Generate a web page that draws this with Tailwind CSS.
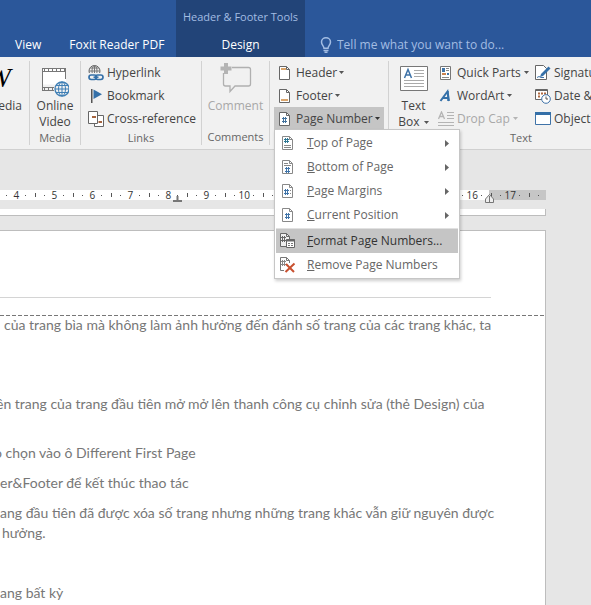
<!DOCTYPE html>
<html lang="vi">
    <head>
        <meta charset="UTF-8">
        <meta name="viewport" content="width=device-width, initial-scale=1.0">
        <title>Header &amp; Footer Tools</title>
        <script src="https://cdn.jsdelivr.net/npm/@tailwindcss/browser@4"></script>
    </head>
    <body class="min-h-screen flex flex-col overflow-hidden bg-[#e6e6e6] font-['Open_Sans','Noto_Sans',sans-serif] text-[12px] leading-4 text-[#444]">
        <!-- Tabs -->
        <header class="h-[57px] shrink-0 flex bg-[#2b579a] text-white whitespace-nowrap">
            <nav class="w-[176px] shrink-0 flex items-end gap-7 pl-[15px] pb-1">
                <a href="#">View</a>
                <a href="#">Foxit Reader PDF</a>
            </nav>
            <div class="w-[129px] shrink-0 flex flex-col items-center justify-between bg-[#224478] pt-[9px] pb-1">
                <span class="text-[11px] text-[#a3bde3]">Header &amp; Footer Tools</span>
                <a href="#">Design</a>
            </div>
            <label class="flex items-end gap-[5px] pl-[15px] pb-1 grow text-[#a3bde3]">
                <svg class="w-3 h-4 shrink-0" viewBox="0 0 12 16" fill="none" stroke="#a3bde3" stroke-width="1.5">
                    <path d="M4 11.2C4 9 1.5 8 1.5 5a4.5 4.2 0 0 1 9 0c0 3-2.500 4-2.500 6.200z"></path>
                    <path d="M3.500 13.500h5M4.500 15.200h3"></path>
                </svg>
                <input type="text" placeholder="Tell me what you want to do..." class="grow h-4 min-w-0 outline-none placeholder:text-[#a3bde3] placeholder:opacity-100">
            </label>
        </header>
        <!-- Ribbon -->
        <section class="h-[93px] shrink-0 flex py-1 bg-[#f1f1f1] border-b border-[#d0d0d0] whitespace-nowrap">
            <div class="w-[30px] shrink-0 flex justify-end border-r border-[#d2d2d2]">
                <button class="flex flex-col items-start pr-[7px]">
                    <span class="h-[37px] pt-px font-['Liberation_Serif',serif] italic text-[28px] leading-8 text-black">W</span>
                    <span>Media</span>
                </button>
            </div>
            <div class="w-[51px] shrink-0 flex flex-col items-center justify-between border-r border-[#d2d2d2]">
                <button class="flex flex-col items-center">
                    <svg class="w-7 h-[37px]" viewBox="0 0 28 37" fill="none">
                        <path d="M1 7.500h24v16H1z" fill="#fff"></path>
                        <path d="M1.500 7v23M24.500 7v11M1 7.500h24M1 10.500h24M1 26.500h12M1 29.500h12" stroke="#777"></path>
                        <path d="M3 9h22M3 28h10" stroke="#777" stroke-width="2" stroke-dasharray="1 3"></path>
                        <circle cx="21" cy="28" r="7" fill="#f1f1f1" stroke="#3f7fb5" stroke-width="1.300"></circle>
                        <path d="M14 28h14M21 21v14M15 24.500h12M15 31.500h12" stroke="#3f7fb5"></path>
                        <ellipse cx="21" cy="28" rx="3.500" ry="7" stroke="#3f7fb5"></ellipse>
                    </svg>
                    <span>Online<br>Video</span>
                </button>
                <span class="text-[11px] text-[#666]">Media</span>
            </div>
            <div class="w-[121px] shrink-0 flex flex-col items-center justify-between border-r border-[#d2d2d2]">
                <div class="w-full flex flex-col pl-[7px]">
                    <button class="h-[23px] flex items-center gap-[3px]">
                        <svg class="w-4 h-4" viewBox="0 0 16 16" fill="none">
                            <circle cx="6.500" cy="6" r="5.500" stroke="#666"></circle>
                            <path d="M1 6h11M6.500 .5v9M2 3h9" stroke="#777"></path>
                            <ellipse cx="6.500" cy="6" rx="2.500" ry="5.500" stroke="#777"></ellipse>
                            <path d="M0 8h16v8H0z" fill="#f1f1f1"></path>
                            <rect x="1" y="10" width="7.500" height="4.500" rx="2.200" stroke="#3570a8" stroke-width="1.700"></rect>
                            <rect x="7.500" y="10" width="7.500" height="4.500" rx="2.200" stroke="#3570a8" stroke-width="1.700"></rect>
                            <path d="M5.500 12.200h5" stroke="#3570a8" stroke-width="1.500"></path>
                        </svg>
                        Hyperlink
                    </button>
                    <button class="h-[23px] flex items-center gap-[3px]">
                        <svg class="w-4 h-4" viewBox="0 0 16 16">
                            <path d="M3 1h1.500v14H3z" fill="#555"></path>
                            <path d="M5.500 1.500L14 6.300l-8.500 4.700z" fill="#3570a8"></path>
                        </svg>
                        Bookmark
                    </button>
                    <button class="h-[23px] flex items-center gap-[3px]">
                        <svg class="w-4 h-4" viewBox="0 0 16 16" fill="none" stroke="#666">
                            <path d="M9.500 4.500h6v11h-9v-3" fill="#fff"></path>
                            <path d="M.5 .5h9v12h-9z" fill="#fff"></path>
                            <path d="M4 6h4M10.500 11h3.500" stroke="#a5643f" stroke-width="2"></path>
                        </svg>
                        Cross-reference
                    </button>
                </div>
                <span class="text-[11px] text-[#666]">Links</span>
            </div>
            <div class="w-[68px] shrink-0 flex flex-col items-center justify-between border-r border-[#d2d2d2]">
                <button class="flex flex-col items-center text-[#a8a8a8]" disabled>
                    <svg class="w-8 h-[37px]" viewBox="0 0 32 37" fill="none">
                        <path d="M12 6.500h16.500q2 0 2 2v14.500q0 2-2 2H15l-5 5.500v-5.500H5.500q-2 0-2-2V12" stroke="#b0b0b0" stroke-width="1.300"></path>
                        <path d="M6 2v11M.5 7.500h11" stroke="#b4b4b4" stroke-width="4"></path>
                    </svg>
                    <span>Comment</span>
                </button>
                <span class="text-[11px] text-[#666]">Comments</span>
            </div>
            <div class="w-[119px] shrink-0 flex flex-col pl-1 border-r border-[#d2d2d2]">
                <button class="h-[23px] flex items-center gap-1 pl-1">
                    <svg class="w-[14px] h-4 shrink-0" viewBox="0 0 14 16" fill="none">
                        <path d="M1.500 1.500h7l3 3v10h-10z" fill="#fff" stroke="#666"></path>
                        <path d="M8.500 1.500v3h3" stroke="#666"></path>
                        <path d="M3 4h5" stroke="#dba56b" stroke-width="2"></path>
                    </svg>
                    Header
                    <svg class="w-[5px] h-[3px] -ml-[2px]" viewBox="0 0 5 3"><path d="M0 0h5L2.500 3z" fill="#555"></path></svg>
                </button>
                <button class="h-[23px] flex items-center gap-1 pl-1">
                    <svg class="w-[14px] h-4 shrink-0" viewBox="0 0 14 16" fill="none">
                        <path d="M1.500 1.500h7l3 3v10h-10z" fill="#fff" stroke="#666"></path>
                        <path d="M8.500 1.500v3h3" stroke="#666"></path>
                        <path d="M3 12h7" stroke="#dba56b" stroke-width="2"></path>
                    </svg>
                    Footer
                    <svg class="w-[5px] h-[3px] -ml-[2px]" viewBox="0 0 5 3"><path d="M0 0h5L2.500 3z" fill="#555"></path></svg>
                </button>
                <div class="relative w-[110px]">
                    <button id="page-number-btn" class="w-full h-[23px] flex items-center gap-1 pl-1 bg-[#c5c5c5]">
                        <svg class="w-[14px] h-4 shrink-0" viewBox="0 0 14 16" fill="none">
                            <path d="M1.500 1.500h7l3 3v10h-10z" fill="#fff" stroke="#666"></path>
                            <path d="M8.500 1.500v3h3" stroke="#666"></path>
                            <path d="M5.500 6v6M7.500 6v6M4 7.500h5M4 10.500h5" stroke="#41719c"></path>
                        </svg>
                        Page Number
                        <svg class="w-[5px] h-[3px] -ml-[2px]" viewBox="0 0 5 3"><path d="M0 0h5L2.500 3z" fill="#333"></path></svg>
                    </button>
                    <!-- Page number menu -->
                    <ul id="page-number-menu" class="absolute top-[22px] left-0 z-10 w-[186px] p-px bg-white border border-[#c6c6c6] shadow-[1px_2px_3px_rgba(0,0,0,0.2)] text-[#666]">
                        <li>
                            <button class="w-full h-6 flex items-center pl-[3px] pr-[9px]">
                                <svg class="w-[18px] h-4 mr-[10px]" viewBox="0 0 18 16" fill="none">
                                    <path d="M3.500 1.500h7l3 3v10h-10z" stroke="#888"></path>
                                    <path d="M10.500 1.500v3h3M5 10.500h7M5 12.500h7" stroke="#888"></path>
                                    <path d="M6.500 3v5M8.500 3v5M5 4.500h5M5 6.500h5" stroke="#2f7894"></path>
                                </svg>
                                <span><u>T</u>op of Page</span>
                                <svg class="w-1 h-[7px] ml-auto" viewBox="0 0 4 7"><path d="M0 0l4 3.500L0 7z" fill="#666"></path></svg>
                            </button>
                        </li>
                        <li>
                            <button class="w-full h-6 flex items-center pl-[3px] pr-[9px]">
                                <svg class="w-[18px] h-4 mr-[10px]" viewBox="0 0 18 16" fill="none">
                                    <path d="M3.500 1.500h7l3 3v10h-10z" stroke="#888"></path>
                                    <path d="M10.500 1.500v3h3M5 4.500h4M5 6.500h7" stroke="#888"></path>
                                    <path d="M7.500 8v6M9.500 8v6M6 9.500h5M6 12.500h5" stroke="#3f73a8"></path>
                                </svg>
                                <span><u>B</u>ottom of Page</span>
                                <svg class="w-1 h-[7px] ml-auto" viewBox="0 0 4 7"><path d="M0 0l4 3.500L0 7z" fill="#666"></path></svg>
                            </button>
                        </li>
                        <li>
                            <button class="w-full h-6 flex items-center pl-[3px] pr-[9px]">
                                <svg class="w-[18px] h-4 mr-[10px]" viewBox="0 0 18 16" fill="none">
                                    <path d="M3.500 1.500h7l3 3v10h-10z" stroke="#888"></path>
                                    <path d="M10.500 1.500v3h3M11 7.500h1M11 10.500h1" stroke="#888"></path>
                                    <path d="M6.500 6v6M8.500 6v6M5 7.500h5M5 10.500h5" stroke="#3f73a8"></path>
                                </svg>
                                <span><u>P</u>age Margins</span>
                                <svg class="w-1 h-[7px] ml-auto" viewBox="0 0 4 7"><path d="M0 0l4 3.500L0 7z" fill="#666"></path></svg>
                            </button>
                        </li>
                        <li>
                            <button class="w-full h-6 flex items-center pl-[3px] pr-[9px]">
                                <svg class="w-[18px] h-4 mr-[10px]" viewBox="0 0 18 16" fill="none">
                                    <path d="M3.500 1.500h7l3 3v10h-10z" stroke="#888"></path>
                                    <path d="M10.500 1.500v3h3" stroke="#888"></path>
                                    <path d="M7.500 6v6M9.500 6v6M6 7.500h5M6 10.500h5" stroke="#3f73a8"></path>
                                </svg>
                                <span><u>C</u>urrent Position</span>
                                <svg class="w-1 h-[7px] ml-auto" viewBox="0 0 4 7"><path d="M0 0l4 3.500L0 7z" fill="#666"></path></svg>
                            </button>
                        </li>
                        <li class="mt-px border-t border-[#e1e1e1]">
                            <button class="w-full h-6 flex items-center pl-[3px] bg-[#c5c5c5] text-[#333]">
                                <svg class="w-[18px] h-4 mr-[10px]" viewBox="0 0 18 16" fill="none">
                                    <path d="M1.500 .5h6l3 3v10h-9z" fill="#eee" stroke="#666"></path>
                                    <path d="M7.500 .5v3h3" stroke="#666"></path>
                                    <path d="M3.500 3v6M5.500 3v6M2 4.500h5M2 7.500h5" stroke="#666"></path>
                                    <path d="M7.500 6.500h8v8h-8z" fill="#fff" stroke="#666"></path>
                                    <path d="M7 7.500h9" stroke="#666" stroke-width="2"></path>
                                    <path d="M9 10.500h2M12 10.500h2M9 12.500h2M12 12.500h2" stroke="#777"></path>
                                </svg>
                                <span><u>F</u>ormat Page Numbers...</span>
                            </button>
                        </li>
                        <li>
                            <button class="w-full h-6 flex items-center pl-[3px]">
                                <svg class="w-[18px] h-4 mr-[10px]" viewBox="0 0 18 16" fill="none">
                                    <path d="M5 13.500H1.500V.5h6l3 3V6" stroke="#777"></path>
                                    <path d="M7.500 .5v3h3" stroke="#777"></path>
                                    <path d="M3.500 3v6M5.500 3v6M2 4.500h5M2 7.500h5" stroke="#888"></path>
                                    <path d="M7 7l8 8M15.500 6.500l-9 8.500" stroke="#c8502f" stroke-width="2"></path>
                                </svg>
                                <span><u>R</u>emove Page Numbers</span>
                            </button>
                        </li>
                    </ul>
                </div>
            </div>
            <div class="w-[264px] shrink-0 flex flex-col items-center justify-between">
                <div class="w-full flex">
                    <button class="w-[49px] flex flex-col items-center">
                        <svg class="w-7 h-[37px]" viewBox="0 0 28 37" fill="none">
                            <path d="M.5 5.500h27v24H.5z" fill="#fff" stroke="#777"></path>
                            <path d="M4.500 17L8 8.500l3.500 8.500M6 14h4.500" stroke="#3f73a8" stroke-width="1.500"></path>
                            <path d="M14 9.500h10M14 12.500h10M14 15.500h10M4 19.500h20M4 22.500h20M4 25.500h20" stroke="#aaa"></path>
                        </svg>
                        <span>Text</span>
                        <span class="flex items-center gap-1">Box <svg class="w-[5px] h-[3px]" viewBox="0 0 5 3"><path d="M0 0h5L2.500 3z" fill="#555"></path></svg></span>
                    </button>
                    <div class="w-[97px] flex flex-col">
                        <button class="h-[23px] flex items-center gap-[3px]">
                            <svg class="w-4 h-4 shrink-0" viewBox="0 0 16 16" fill="none">
                                <path d="M2.500 1.500h10v13h-10z" fill="#fff" stroke="#777"></path>
                                <path d="M4 5h3" stroke="#3f73a8" stroke-width="4"></path>
                                <path d="M8 3.500h3M8 5.500h3M4 12.500h7" stroke="#888"></path>
                                <path d="M4 9h4" stroke="#c98350" stroke-width="2"></path>
                                <path d="M9 9h2" stroke="#3f73a8" stroke-width="2"></path>
                            </svg>
                            Quick Parts
                            <svg class="w-[5px] h-[3px]" viewBox="0 0 5 3"><path d="M0 0h5L2.500 3z" fill="#555"></path></svg>
                        </button>
                        <button class="h-[23px] flex items-center gap-[3px]">
                            <svg class="w-4 h-4 shrink-0" viewBox="0 0 16 16" fill="none">
                                <path d="M2.500 13L9.500 3.500 11 13M5 10h5.500" stroke="#3570a8" stroke-width="2"></path>
                                <path d="M10 3v10" stroke="#3570a8" stroke-width="1.500"></path>
                            </svg>
                            WordArt
                            <svg class="w-[5px] h-[3px]" viewBox="0 0 5 3"><path d="M0 0h5L2.500 3z" fill="#555"></path></svg>
                        </button>
                        <button class="h-[23px] flex items-center gap-[3px] text-[#a8a8a8]" disabled>
                            <svg class="w-4 h-4 shrink-0" viewBox="0 0 16 16" fill="none" stroke="#b4b4b4">
                                <path d="M.5 8L3.500 1l3 7M1.500 5.500h4" stroke-width="1.300"></path>
                                <path d="M9 1.500h7M9 4.500h7M9 7.500h7M0 11.500h16M0 14.500h16"></path>
                            </svg>
                            Drop Cap
                            <svg class="w-[5px] h-[3px]" viewBox="0 0 5 3"><path d="M0 0h5L2.500 3z" fill="#b4b4b4"></path></svg>
                        </button>
                    </div>
                    <div class="flex flex-col">
                        <button class="h-[23px] flex items-center gap-[3px]">
                            <svg class="w-4 h-4 shrink-0" viewBox="0 0 16 16" fill="none">
                                <path d="M.5 .5h8l3 3v11H.5z" fill="#fff" stroke="#666"></path>
                                <path d="M5 12l1-3L13.500 1.500l2 2L8 11z" fill="#3570a8"></path>
                                <path d="M2 12.500q2-2 4 0h3" stroke="#3f73a8"></path>
                            </svg>
                            Signature Line
                        </button>
                        <button class="h-[23px] flex items-center gap-[3px]">
                            <svg class="w-4 h-4 shrink-0" viewBox="0 0 16 16" fill="none">
                                <path d="M.5 1.500h12v10H.5z" fill="#fff" stroke="#666"></path>
                                <path d="M1 2.500h11" stroke="#666"></path>
                                <path d="M3 5.500h2M6 5.500h2M9 5.500h2M3 8.500h2" stroke="#b06a42" stroke-width="2"></path>
                                <circle cx="11" cy="11" r="4.300" fill="#fff" stroke="#3f73a8"></circle>
                                <path d="M11 8.500V11h2" stroke="#555"></path>
                            </svg>
                            Date &amp; Time
                        </button>
                        <button class="h-[23px] flex items-center gap-[3px]">
                            <svg class="w-4 h-4 shrink-0" viewBox="0 0 16 16" fill="none">
                                <path d="M.5 1.500h15v12H.5z" fill="#fff" stroke="#3f73a8"></path>
                                <path d="M0 2.500h16" stroke="#3570a8" stroke-width="3"></path>
                            </svg>
                            Object
                        </button>
                    </div>
                </div>
                <span class="text-[11px] text-[#666]">Text</span>
            </div>
        </section>
        <!-- Document area -->
        <main class="grow mr-[45px] pt-10 flex flex-col">
            <div class="relative h-[10px] shrink-0 flex">
                <div class="grow bg-white"></div>
                <div class="w-[57px] bg-[#c6c6c6]"></div>
                <div id="ruler" class="absolute inset-0 overflow-hidden pl-[2px] flex text-[10px] leading-[10px] text-[#333]"></div>
                <svg class="absolute left-[173px] top-[6px] w-[9px] h-[7px]" viewBox="0 0 9 7"><path d="M3.500 0h2v4H9v2H0V4h3.500z" fill="#777"></path></svg>
                <svg class="absolute right-[52px] top-[4px] w-[9px] h-[9px]" viewBox="0 0 9 9"><path d="M.5 8.500V5l4-4.500 4 4.500v3.500z" fill="#eee" stroke="#777"></path><path d="M4.500 2v6" stroke="#777"></path></svg>
            </div>
            <div class="h-[7px] mt-[9px] shrink-0 bg-white border-r border-b border-[#bdbdbd]"></div>
            <article class="grow mt-[14px] bg-white border-t border-r border-[#bdbdbd] font-[Lato,'Noto_Sans',sans-serif] text-[14px] leading-5 text-[#777] whitespace-nowrap">
                <div class="h-[67px] mr-[54px] border-b border-[#d4d4d4]"></div>
                <svg class="block w-full h-[18px] -mb-px"><path d="M0 17.500h900" stroke="#777" stroke-dasharray="4 2"></path></svg>
                <p class="mb-[59px] pl-1">của trang bìa mà không làm ảnh hưởng đến đánh số trang của các trang khác, ta</p>
                <p class="mb-[29px] -indent-1">ên trang của trang đầu tiên mở mở lên thanh công cụ chỉnh sửa (thẻ Design) của</p>
                <p class="mb-[10px] -indent-[6px]">ỏ chọn vào ô Different First Page</p>
                <p class="mb-[10px]">er&amp;Footer để kết thúc thao tác</p>
                <p class="mb-[40px]">ang đầu tiên đã được xóa số trang nhưng những trang khác vẫn giữ nguyên được<br><span class="pl-[2px]">hưởng.</span></p>
                <p>ang bất kỳ</p>
            </article>
        </main>
    </body>
</html>
<script>
const ruler = document.getElementById('ruler');
const menuBtn = document.getElementById('page-number-btn');
const menu = document.getElementById('page-number-menu');

// Each centimetre: dot, number, dot, half tick
for (let cm = 4; cm <= 18; cm++) {
  const label = cm < 18 ? cm : '';
  ruler.insertAdjacentHTML('beforeend', `
    <div class="w-[38px] shrink-0 grid grid-cols-4 items-center justify-items-center">
      <i class="w-px h-px bg-[#555]"></i>
      <span class="w-0 flex justify-center">${label}</span>
      <i class="w-px h-px bg-[#555]"></i>
      <i class="w-px h-1 bg-[#555]"></i>
    </div>`);
}

menuBtn.addEventListener('click', () => {
  menu.classList.toggle('hidden');
});
</script>
